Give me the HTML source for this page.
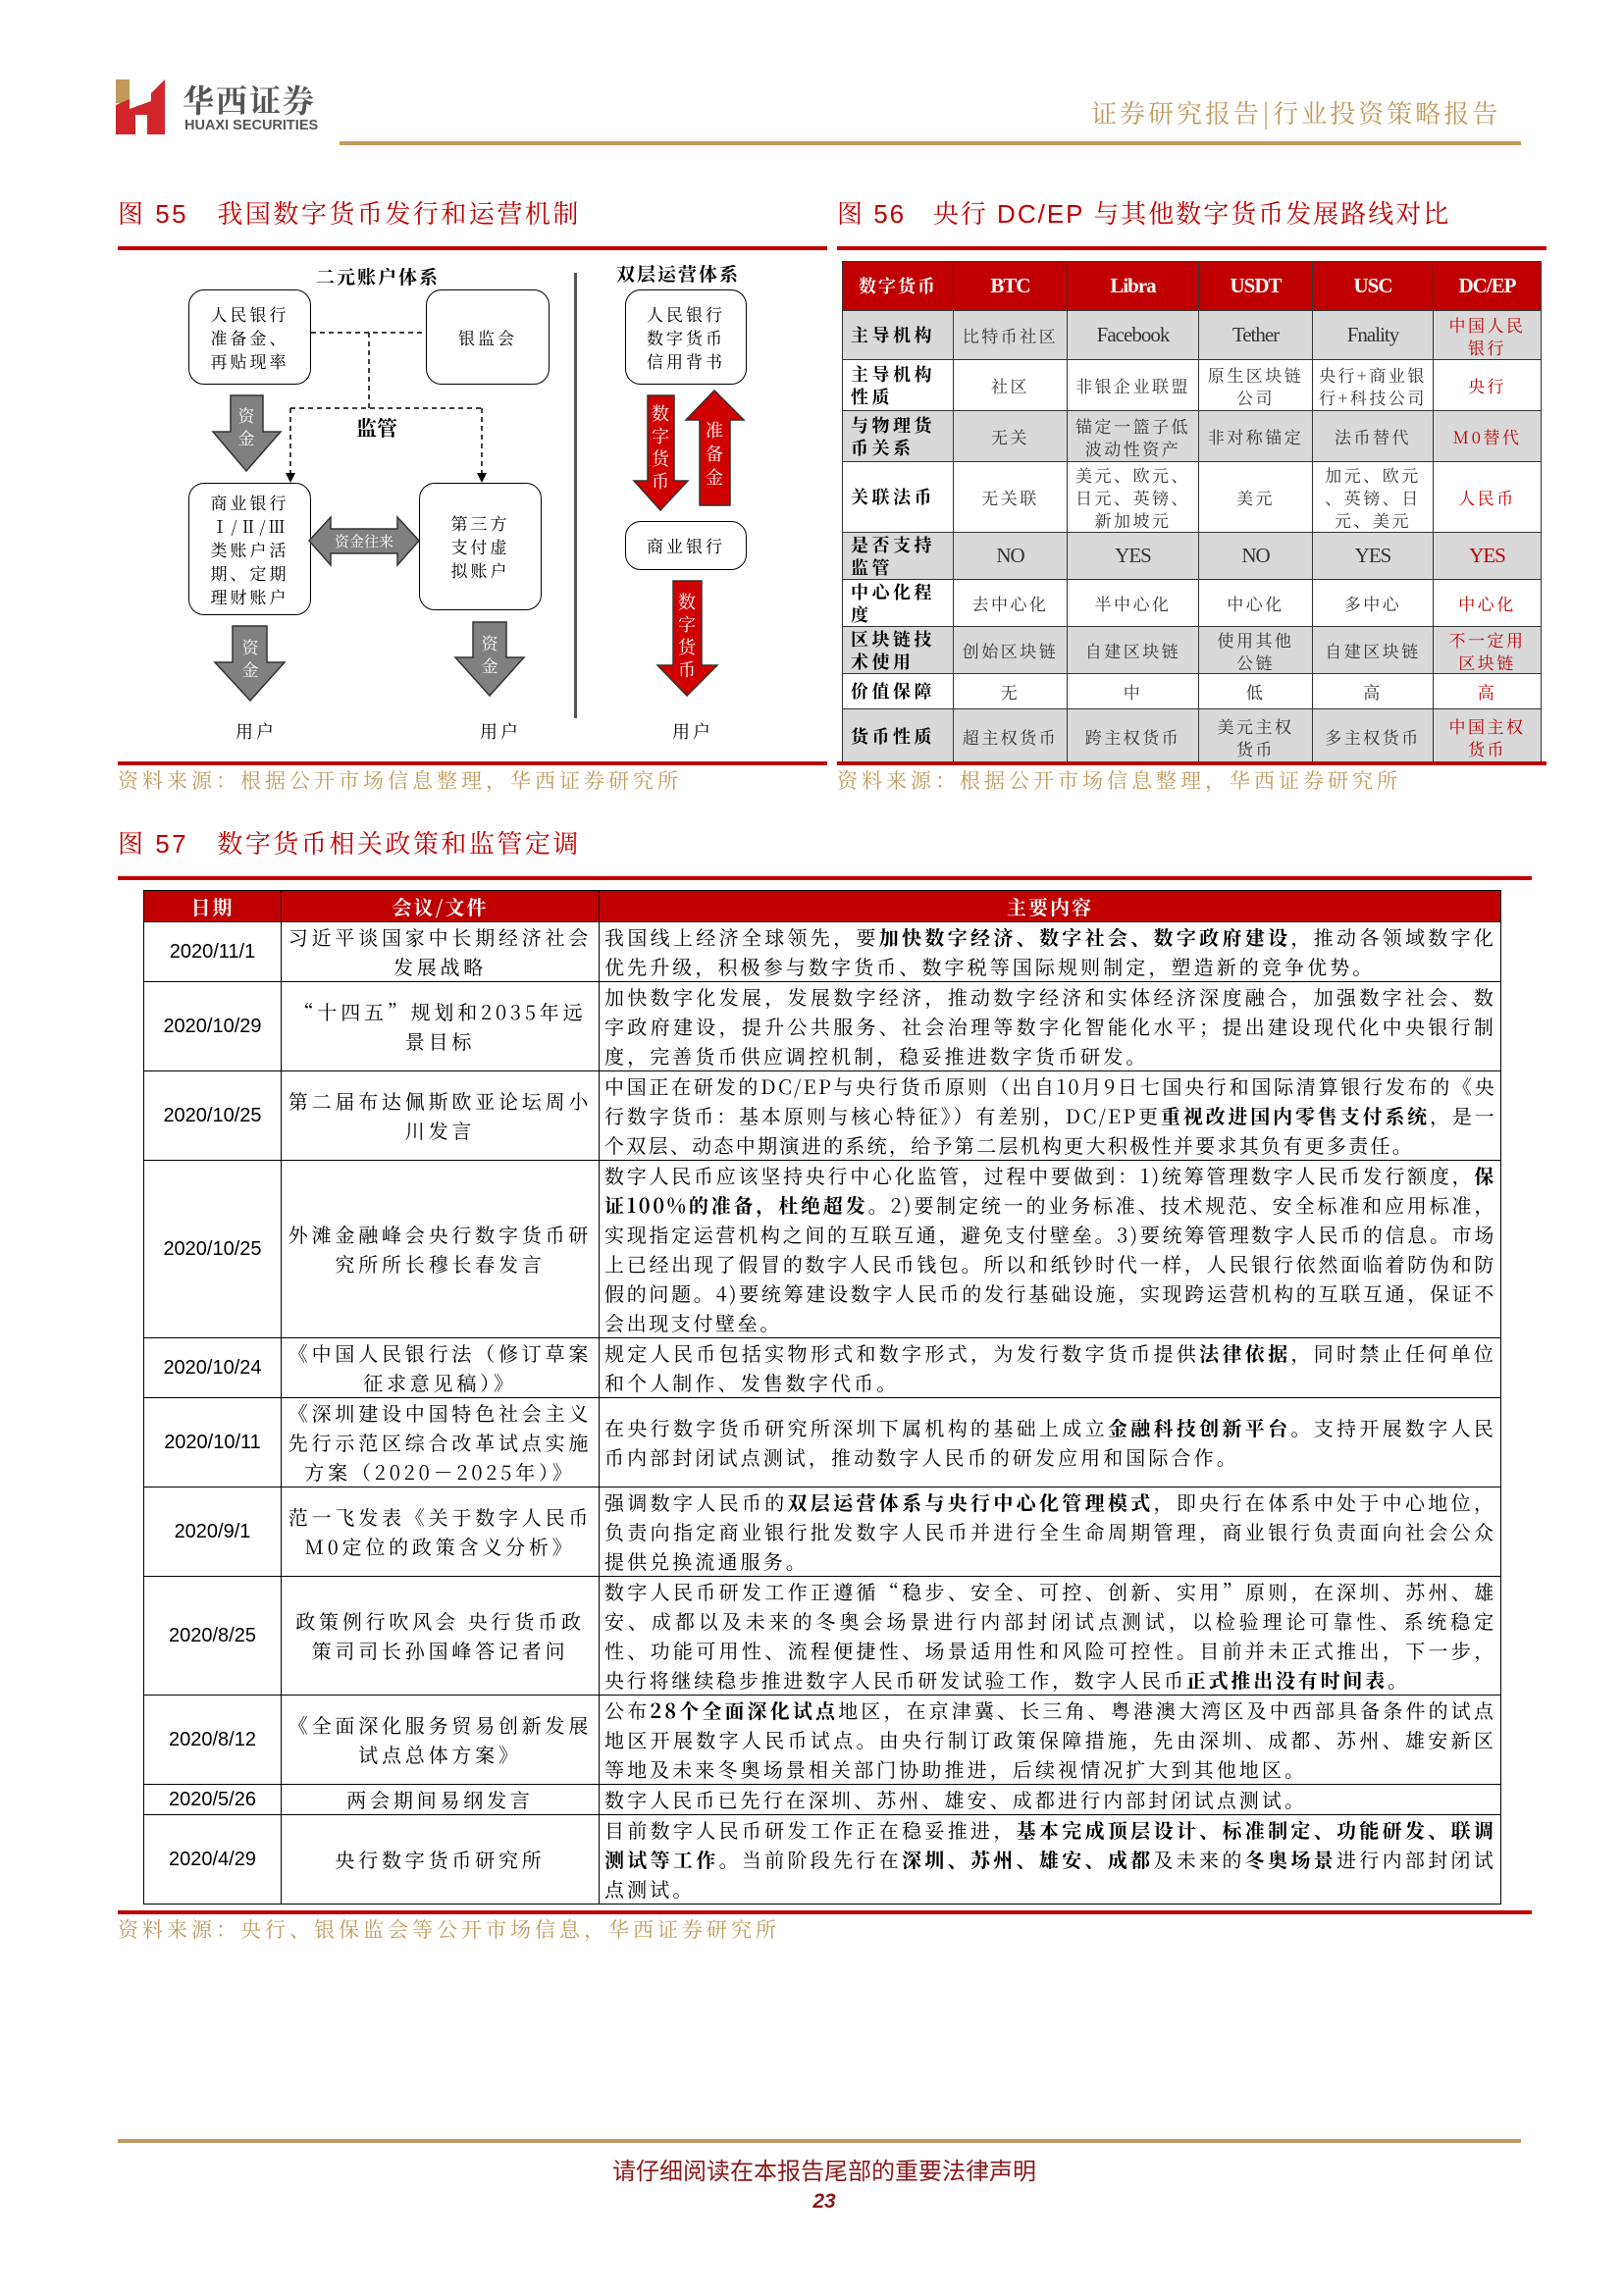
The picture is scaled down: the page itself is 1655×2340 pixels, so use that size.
<!DOCTYPE html>
<html><head><meta charset="utf-8">
<style>
*{margin:0;padding:0;box-sizing:border-box}
body{width:1655px;height:2340px;background:#fff;position:relative;overflow:hidden;font-family:"Liberation Serif","Noto Serif CJK SC",serif;color:#000}
.a{position:absolute}
.title{font-family:"Liberation Sans","Noto Serif CJK SC",serif;color:#c00000;font-size:26px;white-space:nowrap;letter-spacing:2.5px}
.src{font-family:"Liberation Serif","Noto Serif CJK SC",serif;color:#c09a5b;font-size:21px;white-space:nowrap;letter-spacing:4px}
.box{position:absolute;border:1.5px solid #000;border-radius:16px;background:#fff;font-family:"Noto Serif CJK SC",serif;font-size:17px;line-height:24px;letter-spacing:3px;display:flex;align-items:center;justify-content:center;text-align:center}
.lbl{position:absolute;font-family:"Noto Serif CJK SC",serif;font-size:18px;white-space:nowrap}
table{border-collapse:collapse;position:absolute;table-layout:fixed}
.t56 td{border:1.5px solid #333;text-align:center;vertical-align:middle;font-family:"Noto Serif CJK SC",serif;font-size:17px;line-height:23px;letter-spacing:2.5px;color:#333;padding:0 1px}
.t56 tr.h td{background:#c00000;color:#fff;font-family:"Liberation Serif","Noto Serif CJK SC",serif;font-weight:bold;font-size:21px;letter-spacing:-1px}
.t56 tr.g td{background:#d9d9d9}
.t56 td.f{font-weight:bold;color:#000;text-align:left;padding-left:8px;font-size:18px;letter-spacing:3.5px}
.t56 td.r{color:#c00000}
.t56 .e{font-family:"Liberation Serif",serif;font-size:21px;letter-spacing:-1px}
.t57 td{border:1.5px solid #000;font-family:"Noto Serif CJK SC",serif;font-size:20px;line-height:30px;vertical-align:middle;overflow:hidden}
.t57 td.d{text-align:center;font-family:"Liberation Sans",sans-serif;font-size:20px}
.t57 td.m{text-align:center;padding:0 3px;letter-spacing:3.8px}
.t57 td.c{text-align:justify;padding:0 4px 0 5px;letter-spacing:3.1px}
.t57 tr.h td{background:#c00000;color:#fff;font-weight:bold;text-align:center;font-size:20px;letter-spacing:2px}
</style></head><body>

<!-- logo -->
<svg class="a" style="left:118px;top:81px" width="52" height="56" viewBox="0 0 52 56">
<rect x="0" y="0" width="14" height="24" fill="#c09a5b"/>
<polygon points="0,26 14,20 14,56 0,56" fill="#d0262b"/>
<polygon points="14,30 36,22 36,56 14,56" fill="#d0262b"/>
<polygon points="36,14 50,0 50,56 36,56" fill="#d0262b"/>
<rect x="20" y="36" width="12" height="20" fill="#fff"/>
</svg>
<div class="a" style="left:186px;top:78px;font-family:'Noto Serif CJK SC',serif;font-weight:bold;font-size:32px;color:#555;letter-spacing:2px">华西证券</div>
<div class="a" style="left:188px;top:120px;font-family:'Liberation Sans',sans-serif;font-size:14.5px;color:#555;font-weight:bold">HUAXI SECURITIES</div>
<div class="a" style="left:1112px;top:96px;font-family:'Noto Serif CJK SC',serif;font-size:26px;color:#c09a5b;white-space:nowrap;letter-spacing:3px">证券研究报告|行业投资策略报告</div>
<div class="a" style="left:346px;top:144px;width:1204px;height:4px;background:#c09a5b"></div>

<!-- titles -->
<div class="a title" style="left:120px;top:198px">图 55&nbsp;&nbsp;&nbsp;我国数字货币发行和运营机制</div>
<div class="a title" style="left:853px;top:198px;letter-spacing:2px">图 56&nbsp;&nbsp;&nbsp;央行 DC/EP 与其他数字货币发展路线对比</div>
<div class="a" style="left:120px;top:251px;width:723px;height:4px;background:#c00000"></div>
<div class="a" style="left:853px;top:251px;width:723px;height:4px;background:#c00000"></div>

<!-- Fig 55 diagram -->
<div class="lbl" style="left:322px;top:268px;font-weight:bold;font-size:19px;letter-spacing:2px">二元账户体系</div>
<div class="lbl" style="left:628px;top:265px;font-weight:bold;font-size:19px;letter-spacing:2px">双层运营体系</div>
<div class="box" style="left:192px;top:295px;width:125px;height:97px">人民银行<br>准备金、<br>再贴现率</div>
<div class="box" style="left:434px;top:295px;width:126px;height:97px">银监会</div>
<div class="box" style="left:637px;top:295px;width:124px;height:97px">人民银行<br>数字货币<br>信用背书</div>
<div class="box" style="left:192px;top:492px;width:125px;height:135px">商业银行<br>Ⅰ/Ⅱ/Ⅲ<br>类账户活<br>期、定期<br>理财账户</div>
<div class="box" style="left:427px;top:492px;width:125px;height:130px">第三方<br>支付虚<br>拟账户</div>
<div class="box" style="left:637px;top:531px;width:124px;height:50px">商业银行</div>
<div class="a" style="left:585px;top:278px;width:3px;height:454px;background:#555"></div>
<svg class="a" style="left:0;top:0" width="843" height="780">
<g stroke="#000" stroke-width="1.5" stroke-dasharray="5,4" fill="none">
<line x1="317" y1="339" x2="434" y2="339"/><line x1="376" y1="339" x2="376" y2="416"/>
<line x1="296" y1="416" x2="491" y2="416"/><line x1="296" y1="416" x2="296" y2="485"/><line x1="491" y1="416" x2="491" y2="485"/>
</g>
<polygon points="291,482 301,482 296,492" fill="#000"/><polygon points="486,482 496,482 491,492" fill="#000"/>
<g fill="#808080" stroke="#333" stroke-width="1.5">
<polygon points="235,403 268,403 268,440 286,440 251,480 217,440 235,440"/>
<polygon points="237,638 272,638 272,675 290,675 255,714 219,675 237,675"/>
<polygon points="482,634 516,634 516,670 534,670 499,709 464,670 482,670"/>
<polygon points="315,551 337,527 337,539 405,539 405,527 427,551 405,576 405,564 337,564 337,576"/>
</g>
<g fill="#d00000" stroke="#333" stroke-width="1.5">
<polygon points="660,403 687,403 687,490 701,490 673,520 646,490 660,490"/>
<polygon points="713,515 744,515 744,428 758,428 728,398 699,428 713,428"/>
<polygon points="686,592 715,592 715,678 731,678 700,709 670,678 686,678"/>
</g>
<g font-family="Noto Serif CJK SC,serif" font-size="17" fill="#fff" text-anchor="middle">
<text x="251" y="430">资</text><text x="251" y="453">金</text>
<text x="255" y="666">资</text><text x="255" y="689">金</text>
<text x="499" y="662">资</text><text x="499" y="685">金</text>
<text x="371" y="557" font-size="15">资金往来</text>
<text x="673" y="428" font-size="18">数</text><text x="673" y="451" font-size="18">字</text><text x="673" y="474" font-size="18">货</text><text x="673" y="497" font-size="18">币</text>
<text x="728" y="445" font-size="18">准</text><text x="728" y="469" font-size="18">备</text><text x="728" y="493" font-size="18">金</text>
<text x="700" y="620" font-size="18">数</text><text x="700" y="643" font-size="18">字</text><text x="700" y="666" font-size="18">货</text><text x="700" y="689" font-size="18">币</text>
</g>
<text x="384" y="444" font-family="Noto Serif CJK SC,serif" font-size="21" font-weight="bold" text-anchor="middle">监管</text>
<g font-family="Noto Serif CJK SC,serif" font-size="18" text-anchor="middle" letter-spacing="3">
<text x="261" y="752">用户</text><text x="510" y="752">用户</text><text x="706" y="752">用户</text>
</g>
</svg>

<!-- Fig 56 table -->
<table class="t56" style="left:858px;top:266px;width:712px">
<colgroup><col style="width:113px"><col style="width:116px"><col style="width:134px"><col style="width:116px"><col style="width:123px"><col style="width:110px"></colgroup>
<tr class="h" style="height:50px"><td style="font-family:'Noto Serif CJK SC',serif;font-size:18px;letter-spacing:2px">数字货币</td><td>BTC</td><td>Libra</td><td>USDT</td><td>USC</td><td>DC/EP</td></tr>
<tr class="g" style="height:50px"><td class="f">主导机构</td><td>比特币社区</td><td class="e">Facebook</td><td class="e">Tether</td><td class="e">Fnality</td><td class="r">中国人民<br>银行</td></tr>
<tr style="height:52px"><td class="f">主导机构<br>性质</td><td>社区</td><td>非银企业联盟</td><td>原生区块链<br>公司</td><td>央行+商业银<br>行+科技公司</td><td class="r">央行</td></tr>
<tr class="g" style="height:52px"><td class="f">与物理货<br>币关系</td><td>无关</td><td>锚定一篮子低<br>波动性资产</td><td>非对称锚定</td><td>法币替代</td><td class="r">M0替代</td></tr>
<tr style="height:72px"><td class="f">关联法币</td><td>无关联</td><td>美元、欧元、<br>日元、英镑、<br>新加坡元</td><td>美元</td><td>加元、欧元<br>、英镑、日<br>元、美元</td><td class="r">人民币</td></tr>
<tr class="g" style="height:48px"><td class="f">是否支持<br>监管</td><td class="e">NO</td><td class="e">YES</td><td class="e">NO</td><td class="e">YES</td><td class="e r">YES</td></tr>
<tr style="height:48px"><td class="f">中心化程<br>度</td><td>去中心化</td><td>半中心化</td><td>中心化</td><td>多中心</td><td class="r">中心化</td></tr>
<tr class="g" style="height:48px"><td class="f">区块链技<br>术使用</td><td>创始区块链</td><td>自建区块链</td><td>使用其他<br>公链</td><td>自建区块链</td><td class="r">不一定用<br>区块链</td></tr>
<tr style="height:36px"><td class="f">价值保障</td><td>无</td><td>中</td><td>低</td><td>高</td><td class="r">高</td></tr>
<tr class="g" style="height:56px"><td class="f">货币性质</td><td>超主权货币</td><td>跨主权货币</td><td>美元主权<br>货币</td><td>多主权货币</td><td class="r">中国主权<br>货币</td></tr>
</table>

<div class="a" style="left:120px;top:776px;width:723px;height:4px;background:#c00000"></div>
<div class="a" style="left:853px;top:776px;width:723px;height:4px;background:#c00000"></div>
<div class="a src" style="left:120px;top:780px">资料来源：根据公开市场信息整理，华西证券研究所</div>
<div class="a src" style="left:853px;top:780px">资料来源：根据公开市场信息整理，华西证券研究所</div>

<!-- Fig 57 -->
<div class="a title" style="left:120px;top:840px">图 57&nbsp;&nbsp;&nbsp;数字货币相关政策和监管定调</div>
<div class="a" style="left:120px;top:893px;width:1441px;height:4px;background:#c00000"></div>

<table class="t57" style="left:146px;top:907px;width:1383px">
<colgroup><col style="width:140px"><col style="width:324px"><col style="width:919px"></colgroup>
<tr class="h" style="height:32px"><td>日期</td><td>会议/文件</td><td>主要内容</td></tr>
<tr style="height:60px"><td class="d">2020/11/1</td><td class="m">习近平谈国家中长期经济社会发展战略</td><td class="c">我国线上经济全球领先，要<b>加快数字经济、数字社会、数字政府建设</b>，推动各领域数字化优先升级，积极参与数字货币、数字税等国际规则制定，塑造新的竞争优势。</td></tr>
<tr style="height:91px"><td class="d">2020/10/29</td><td class="m">“十四五”规划和2035年远景目标</td><td class="c">加快数字化发展，发展数字经济，推动数字经济和实体经济深度融合，加强数字社会、数字政府建设，提升公共服务、社会治理等数字化智能化水平；提出建设现代化中央银行制度，完善货币供应调控机制，稳妥推进数字货币研发。</td></tr>
<tr style="height:91px"><td class="d">2020/10/25</td><td class="m">第二届布达佩斯欧亚论坛周小川发言</td><td class="c" style="letter-spacing:2.3px">中国正在研发的DC/EP与央行货币原则（出自10月9日七国央行和国际清算银行发布的《央行数字货币：基本原则与核心特征》）有差别，DC/EP更<b>重视改进国内零售支付系统</b>，是一个双层、动态中期演进的系统，给予第二层机构更大积极性并要求其负有更多责任。</td></tr>
<tr style="height:181px"><td class="d">2020/10/25</td><td class="m">外滩金融峰会央行数字货币研究所所长穆长春发言</td><td class="c" style="letter-spacing:2.6px">数字人民币应该坚持央行中心化监管，过程中要做到：1)统筹管理数字人民币发行额度，<b>保证100%的准备，杜绝超发</b>。2)要制定统一的业务标准、技术规范、安全标准和应用标准，实现指定运营机构之间的互联互通，避免支付壁垒。3)要统筹管理数字人民币的信息。市场上已经出现了假冒的数字人民币钱包。所以和纸钞时代一样，人民银行依然面临着防伪和防假的问题。4)要统筹建设数字人民币的发行基础设施，实现跨运营机构的互联互通，保证不会出现支付壁垒。</td></tr>
<tr style="height:60px"><td class="d">2020/10/24</td><td class="m">《中国人民银行法（修订草案征求意见稿）》</td><td class="c">规定人民币包括实物形式和数字形式，为发行数字货币提供<b>法律依据</b>，同时禁止任何单位和个人制作、发售数字代币。</td></tr>
<tr style="height:90px"><td class="d">2020/10/11</td><td class="m">《深圳建设中国特色社会主义先行示范区综合改革试点实施方案（2020－2025年）》</td><td class="c">在央行数字货币研究所深圳下属机构的基础上成立<b>金融科技创新平台</b>。支持开展数字人民币内部封闭试点测试，推动数字人民币的研发应用和国际合作。</td></tr>
<tr style="height:91px"><td class="d">2020/9/1</td><td class="m">范一飞发表《关于数字人民币M0定位的政策含义分析》</td><td class="c">强调数字人民币的<b>双层运营体系与央行中心化管理模式</b>，即央行在体系中处于中心地位，负责向指定商业银行批发数字人民币并进行全生命周期管理，商业银行负责面向社会公众提供兑换流通服务。</td></tr>
<tr style="height:120px"><td class="d">2020/8/25</td><td class="m">政策例行吹风会 央行货币政策司司长孙国峰答记者问</td><td class="c" style="letter-spacing:2.8px">数字人民币研发工作正遵循“稳步、安全、可控、创新、实用”原则，在深圳、苏州、雄安、成都以及未来的冬奥会场景进行内部封闭试点测试，以检验理论可靠性、系统稳定性、功能可用性、流程便捷性、场景适用性和风险可控性。目前并未正式推出，下一步，央行将继续稳步推进数字人民币研发试验工作，数字人民币<b>正式推出没有时间表</b>。</td></tr>
<tr style="height:90px"><td class="d">2020/8/12</td><td class="m">《全面深化服务贸易创新发展试点总体方案》</td><td class="c">公布<b>28个全面深化试点</b>地区，在京津冀、长三角、粤港澳大湾区及中西部具备条件的试点地区开展数字人民币试点。由央行制订政策保障措施，先由深圳、成都、苏州、雄安新区等地及未来冬奥场景相关部门协助推进，后续视情况扩大到其他地区。</td></tr>
<tr style="height:31px"><td class="d">2020/5/26</td><td class="m">两会期间易纲发言</td><td class="c">数字人民币已先行在深圳、苏州、雄安、成都进行内部封闭试点测试。</td></tr>
<tr style="height:90px"><td class="d">2020/4/29</td><td class="m">央行数字货币研究所</td><td class="c">目前数字人民币研发工作正在稳妥推进，<b>基本完成顶层设计、标准制定、功能研发、联调测试等工作</b>。当前阶段先行在<b>深圳、苏州、雄安、成都</b>及未来的<b>冬奥场景</b>进行内部封闭试点测试。</td></tr>
</table>

<div class="a" style="left:120px;top:1947px;width:1441px;height:4px;background:#c00000"></div>
<div class="a src" style="left:120px;top:1951px">资料来源：央行、银保监会等公开市场信息，华西证券研究所</div>

<!-- footer -->
<div class="a" style="left:120px;top:2180px;width:1430px;height:4px;background:#c09a5b"></div>
<div class="a" style="left:0;width:1680px;top:2193px;text-align:center;font-family:'Liberation Sans','Noto Sans CJK SC',sans-serif;font-size:24px;color:#8b1a1a">请仔细阅读在本报告尾部的重要法律声明</div>
<div class="a" style="left:0;width:1680px;top:2232px;text-align:center;font-family:'Liberation Sans',sans-serif;font-size:21px;font-weight:bold;font-style:italic;color:#8b1a1a">23</div>
</body></html>
